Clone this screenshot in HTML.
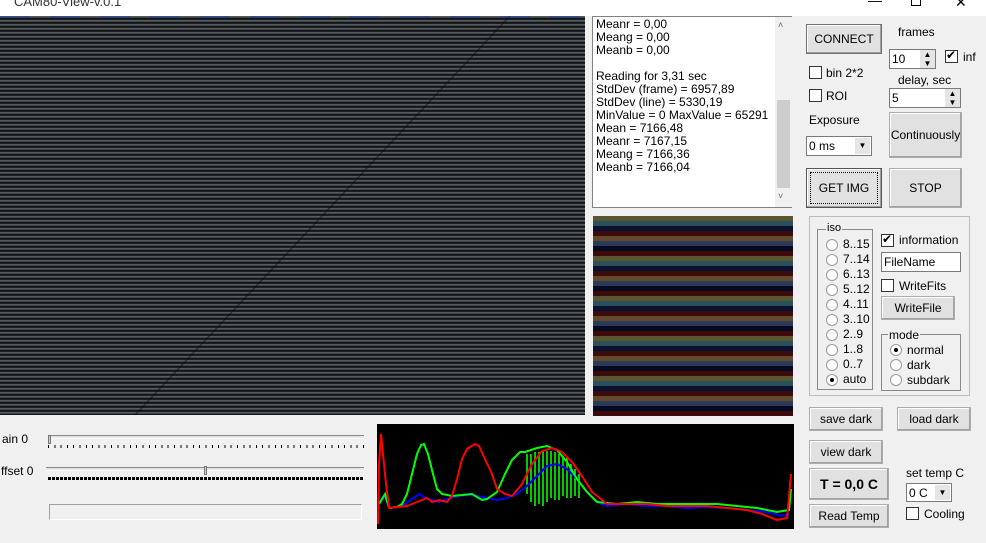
<!DOCTYPE html><html><head><style>
*{margin:0;padding:0;box-sizing:border-box}
body{width:986px;height:543px;background:#f0f0f0;font-family:"Liberation Sans",sans-serif;font-size:12px;color:#000;position:relative;overflow:hidden}
.a{position:absolute}
.btn{position:absolute;background:#e1e1e1;border:1px solid #adadad;box-shadow:inset -1px -1px #a0a0a0,inset 1px 1px #fff;display:flex;align-items:center;justify-content:center;font-size:12px}
.cb{position:absolute;width:13px;height:13px;border:1px solid #333;background:#fff}
.rb{position:absolute;width:12px;height:12px;border-radius:50%;border:1px solid #999;background:#fff}
.t{position:absolute;white-space:nowrap}
.grp{position:absolute;border:1px solid #c8c8c8}
</style></head><body>
<div class="a" style="left:0;top:0;width:986px;height:16px;background:#fff"></div>
<div class="t" style="left:14px;top:-6px;font-size:13px;color:#333">CAM80-View-v.0.1</div>
<div class="t" style="left:868px;top:-8px;font-size:14px">—</div>
<div class="a" style="left:911px;top:-4px;width:10px;height:10px;border:1px solid #000"></div>
<div class="t" style="left:955px;top:-6px;font-size:14px">✕</div>
<!-- main image -->
<div class="a" style="left:0;top:16px;width:585px;height:399px;background:repeating-linear-gradient(180deg,#6a5a34 0 1px,#2c4a6a 1px 2px,#121424 2px 3px,#1e1e1e 3px 4px)"></div>
<svg class="a" style="left:0;top:16px" width="585" height="399"><line x1="510" y1="0" x2="135" y2="399" stroke="#0a0a1a" stroke-width="1.5" opacity="0.5"/><line x1="0" y1="1" x2="585" y2="1" stroke="#2040a0" stroke-width="1" stroke-dasharray="30 20"/></svg>
<!-- text box -->
<div class="a" style="left:592px;top:16px;width:200px;height:192px;background:#fff;border:1px solid #828282"></div>
<div class="a" style="left:775px;top:17px;width:17px;height:190px;background:#f0f0f0"></div>
<div class="a" style="left:777px;top:100px;width:13px;height:88px;background:#cdcdcd"></div>
<div class="t" style="left:778px;top:20px;font-size:9px;color:#666">˄</div>
<div class="t" style="left:778px;top:191px;font-size:9px;color:#666">˅</div>
<div class="a" style="left:596px;top:18px;line-height:13px;font-size:12px">Meanr = 0,00<br>Meang = 0,00<br>Meanb = 0,00<br><br>Reading for 3,31 sec<br>StdDev (frame) = 6957,89<br>StdDev (line) = 5330,19<br>MinValue = 0 MaxValue = 65291<br>Mean = 7166,48<br>Meanr = 7167,15<br>Meang = 7166,36<br>Meanb = 7166,04</div>
<!-- small image -->
<div class="a" style="left:593px;top:216px;width:200px;height:200px;background:repeating-linear-gradient(180deg,#5a5632 0 5px,#2a5058 5px 10px,#0a1030 10px 15px,#3a0c0c 15px 20px,#644a2c 20px 25px,#2a3a58 25px 30px,#060a20 30px 35px,#3c0a0a 35px 40px)"></div>
<!-- right controls -->
<div class="btn" style="left:806px;top:24px;width:76px;height:30px;border-color:#707070;font-size:12px">CONNECT</div>
<div class="t" style="left:898px;top:25px">frames</div>
<div class="a" style="left:889px;top:49px;width:47px;height:20px;background:#fff;border:1px solid #7a7a7a"></div>
<div class="t" style="left:892px;top:52px">10</div>
<div class="a" style="left:920px;top:50px;width:15px;height:18px;background:#e5e5e5;font-size:8px;text-align:center;line-height:9px">▲<br>▼</div>
<div class="cb" style="left:945px;top:50px"></div><div class="t" style="left:946px;top:48px;font-size:12px">✔</div>
<div class="t" style="left:963px;top:50px">inf</div>
<div class="cb" style="left:809px;top:66px"></div><div class="t" style="left:826px;top:66px">bin 2*2</div>
<div class="t" style="left:898px;top:73px">delay, sec</div>
<div class="a" style="left:889px;top:88px;width:72px;height:20px;background:#fff;border:1px solid #7a7a7a"></div>
<div class="t" style="left:892px;top:91px">5</div>
<div class="a" style="left:945px;top:89px;width:15px;height:18px;background:#e5e5e5;font-size:8px;text-align:center;line-height:9px">▲<br>▼</div>
<div class="cb" style="left:809px;top:89px"></div><div class="t" style="left:826px;top:89px">ROI</div>
<div class="t" style="left:809px;top:113px">Exposure</div>
<div class="btn" style="left:889px;top:112px;width:73px;height:46px">Continuously</div>
<div class="a" style="left:806px;top:136px;width:66px;height:20px;background:#fff;border:1px solid #7a7a7a"></div>
<div class="t" style="left:809px;top:139px">0 ms</div>
<div class="a" style="left:855px;top:138px;width:15px;height:16px;background:#e5e5e5;font-size:8px;text-align:center;line-height:16px">▼</div>
<div class="btn" style="left:806px;top:168px;width:76px;height:40px;border-color:#555">GET IMG</div>
<div class="a" style="left:810px;top:172px;width:68px;height:32px;border:1px dotted #000"></div>
<div class="btn" style="left:889px;top:168px;width:73px;height:40px">STOP</div>
<div class="grp" style="left:809px;top:216px;width:161px;height:180px;border-color:#bbb"></div>
<div class="grp" style="left:817px;top:229px;width:56px;height:161px;border-color:#888"></div>
<div class="t" style="left:826px;top:222px;background:#f0f0f0;padding:0 1px;font-size:11px">iso</div>
<div class="rb" style="left:826px;top:239px"></div><div class="t" style="left:843px;top:237px">8..15</div>
<div class="rb" style="left:826px;top:254px"></div><div class="t" style="left:843px;top:252px">7..14</div>
<div class="rb" style="left:826px;top:269px"></div><div class="t" style="left:843px;top:267px">6..13</div>
<div class="rb" style="left:826px;top:284px"></div><div class="t" style="left:843px;top:282px">5..12</div>
<div class="rb" style="left:826px;top:299px"></div><div class="t" style="left:843px;top:297px">4..11</div>
<div class="rb" style="left:826px;top:314px"></div><div class="t" style="left:843px;top:312px">3..10</div>
<div class="rb" style="left:826px;top:329px"></div><div class="t" style="left:843px;top:327px">2..9</div>
<div class="rb" style="left:826px;top:344px"></div><div class="t" style="left:843px;top:342px">1..8</div>
<div class="rb" style="left:826px;top:359px"></div><div class="t" style="left:843px;top:357px">0..7</div>
<div class="rb" style="left:826px;top:374px"></div><div class="a" style="left:830px;top:378px;width:4px;height:4px;border-radius:50%;background:#000"></div><div class="t" style="left:843px;top:372px">auto</div>
<div class="cb" style="left:881px;top:234px"></div><div class="t" style="left:882px;top:232px">✔</div><div class="t" style="left:899px;top:233px">information</div>
<div class="a" style="left:881px;top:252px;width:80px;height:20px;background:#fff;border:1px solid #7a7a7a"></div><div class="t" style="left:884px;top:255px">FileName</div>
<div class="cb" style="left:881px;top:279px"></div><div class="t" style="left:899px;top:279px">WriteFits</div>
<div class="btn" style="left:881px;top:296px;width:74px;height:24px">WriteFile</div>
<div class="grp" style="left:881px;top:334px;width:80px;height:57px;border-color:#888"></div>
<div class="t" style="left:888px;top:328px;background:#f0f0f0;padding:0 1px">mode</div>
<div class="rb" style="left:890px;top:344px"></div><div class="a" style="left:894px;top:348px;width:4px;height:4px;border-radius:50%;background:#000"></div><div class="t" style="left:907px;top:343px">normal</div>
<div class="rb" style="left:890px;top:359px"></div><div class="t" style="left:907px;top:358px">dark</div>
<div class="rb" style="left:890px;top:374px"></div><div class="t" style="left:907px;top:373px">subdark</div>
<div class="btn" style="left:809px;top:407px;width:74px;height:24px">save dark</div>
<div class="btn" style="left:897px;top:407px;width:74px;height:24px">load dark</div>
<div class="btn" style="left:809px;top:440px;width:74px;height:24px">view dark</div>
<div class="btn" style="left:809px;top:468px;width:80px;height:32px;font-weight:bold;font-size:14px">T = 0,0 C</div>
<div class="t" style="left:906px;top:466px">set temp C</div>
<div class="a" style="left:906px;top:483px;width:46px;height:19px;background:#fff;border:1px solid #7a7a7a"></div><div class="t" style="left:909px;top:486px">0 C</div>
<div class="a" style="left:935px;top:485px;width:15px;height:15px;background:#e5e5e5;font-size:8px;text-align:center;line-height:15px">▼</div>
<div class="cb" style="left:906px;top:507px"></div><div class="t" style="left:924px;top:507px">Cooling</div>
<div class="btn" style="left:809px;top:504px;width:80px;height:24px">Read Temp</div>
<!-- sliders -->
<div class="t" style="left:2px;top:432px">ain 0</div>
<div class="t" style="left:1px;top:464px">ffset 0</div>
<div class="a" style="left:48px;top:435px;width:316px;height:4px;border-top:1px solid #888;border-bottom:1px solid #fff;background:#e6e6e6"></div>
<div class="a" style="left:48px;top:435px;width:3px;height:9px;background:#ccc;border:1px solid #777"></div>
<div class="a" style="left:48px;top:445px;width:316px;height:3px;background:repeating-linear-gradient(90deg,#000 0 1px,transparent 1px 6.3px)"></div>
<div class="a" style="left:46px;top:467px;width:318px;height:4px;border-top:1px solid #888;border-bottom:1px solid #fff;background:#e6e6e6"></div>
<div class="a" style="left:204px;top:466px;width:3px;height:9px;background:#ccc;border:1px solid #777"></div>
<div class="a" style="left:48px;top:477px;width:316px;height:3px;background:repeating-linear-gradient(90deg,#000 0 3px,transparent 3px 4px)"></div>
<div class="a" style="left:49px;top:504px;width:313px;height:16px;border:1px solid #a0a0a0;border-right-color:#fff;border-bottom-color:#fff"></div>
<!-- histogram -->
<svg class="a" style="left:377px;top:424px" width="417" height="105" viewBox="0 0 417 105">
<rect width="417" height="105" fill="#000"/>
<g stroke="#00ff00" stroke-width="1.6">
<line x1="150" y1="30" x2="150" y2="70"/><line x1="154" y1="30" x2="154" y2="78"/><line x1="158" y1="28" x2="158" y2="82"/><line x1="162" y1="28" x2="162" y2="80"/><line x1="166" y1="27" x2="166" y2="82"/><line x1="170" y1="27" x2="170" y2="78"/><line x1="174" y1="27" x2="174" y2="74"/><line x1="178" y1="28" x2="178" y2="76"/><line x1="182" y1="30" x2="182" y2="76"/><line x1="186" y1="32" x2="186" y2="72"/><line x1="190" y1="34" x2="190" y2="74"/><line x1="194" y1="40" x2="194" y2="74"/><line x1="198" y1="45" x2="198" y2="72"/><line x1="202" y1="50" x2="202" y2="74"/></g>
<polyline fill="none" stroke="#0000ff" stroke-width="2" points="2,80 8,72 12,84 20,83 28,80 35,75 42,70 48,74 55,76 62,78 70,75 80,72 90,71 100,72 110,74 120,76 130,74 140,70 150,62 160,52 170,42 180,40 190,45 200,55 210,68 220,78 230,82 250,80 270,82 290,82 310,84 330,83 350,84 370,86 390,88 405,92 412,90"/>
<polyline fill="none" stroke="#00ff00" stroke-width="2" points="2,80 8,70 12,84 20,83 25,80 30,70 35,50 40,30 44,21 47,20 51,30 56,50 60,65 65,70 75,72 85,71 95,70 100,73 105,76 110,75 120,68 128,50 135,36 143,28 148,28 160,24 170,22 180,26 190,38 200,55 210,68 220,78 240,80 260,78 280,80 300,80 320,80 340,80 360,82 380,84 400,88 412,86 414,65"/>
<polyline fill="none" stroke="#ff0000" stroke-width="2" points="1,100 2,40 4,10 6,30 9,60 12,84 20,83 30,82 40,78 50,74 55,78 62,76 70,78 75,72 80,55 85,35 90,25 98,20 102,22 108,35 115,50 120,65 128,70 135,72 145,60 155,40 165,27 175,24 185,28 195,38 205,52 215,68 230,80 250,80 270,80 290,82 310,82 330,82 350,84 370,86 385,90 400,96 410,94 414,50"/>
</svg>
</body></html>
